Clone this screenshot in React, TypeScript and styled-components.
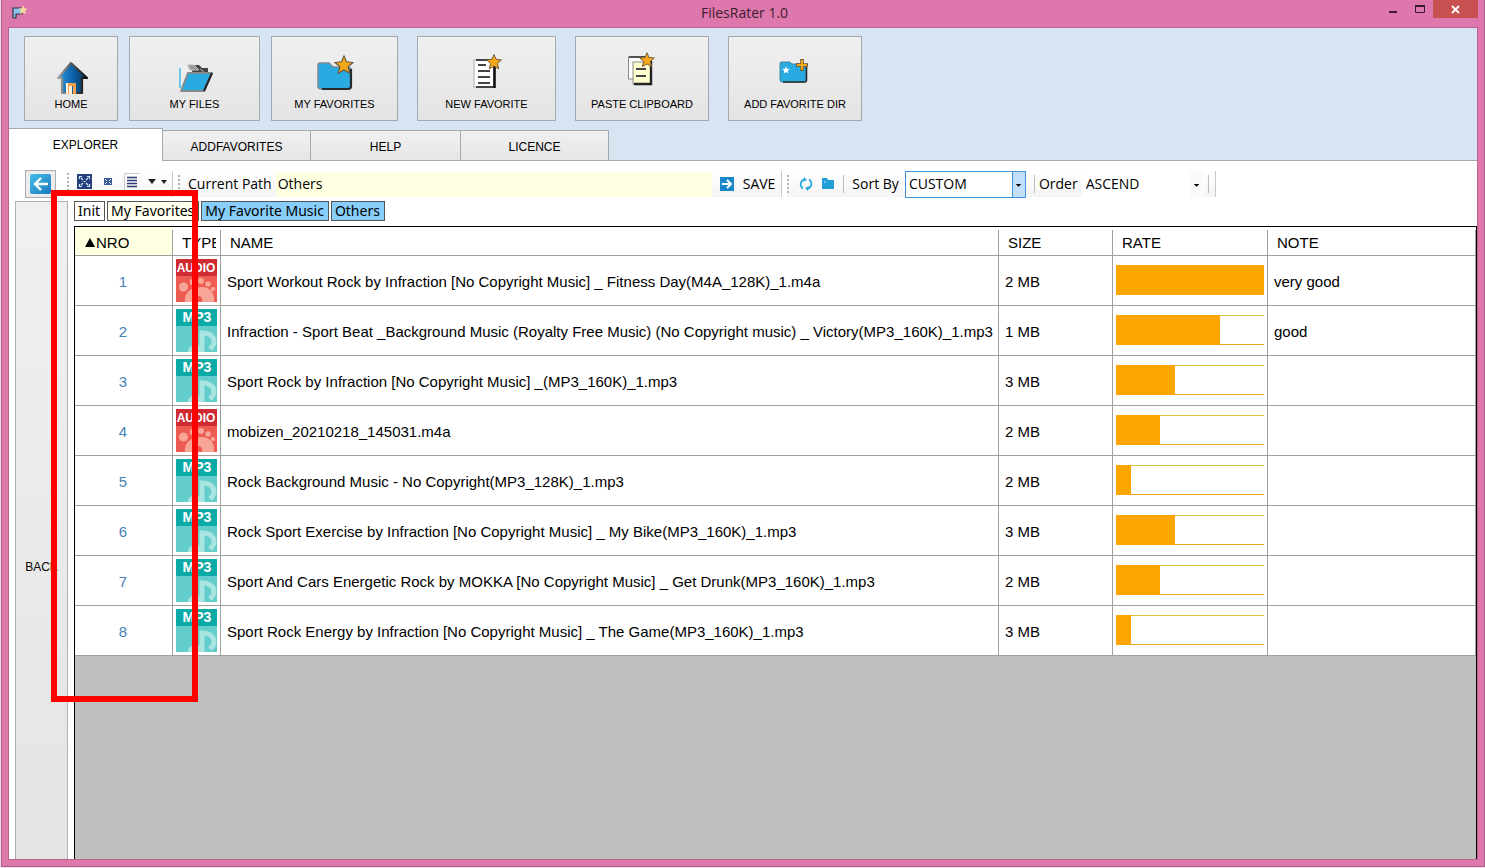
import React from "react";
import styled, { createGlobalStyle } from "styled-components";

const sans = '"Liberation Sans", Arial, sans-serif';
const ui = '"Open Sans", "Noto Sans", sans-serif';
const tahoma = '"Noto Sans", "Open Sans", sans-serif';

const GlobalStyle = createGlobalStyle`
  * { box-sizing: border-box; }
  body { margin: 0; background: #f6dcea; font-family: ${sans}; color: #000; }
  button, input, select { font: inherit; color: inherit; margin: 0; border-radius: 0; }
`;

const Window = styled.div`
  position: relative;
  display: flex;
  flex-direction: column;
  min-height: calc(100vh - 1px);
  margin-left: 1px;
  padding: 0 6px 6px;
  background: #de77ab;
  border: solid #a8608a;
  border-width: 0 1px 1px;
`;

const TitleBar = styled.header`
  display: grid;
  grid-template-columns: 1fr auto 1fr;
  height: 27px;
  padding-left: 3px;
`;

const AppIcon = styled.svg`
  display: block;
  margin-top: 5px;
`;

const Title = styled.h1`
  margin: 0;
  font: 400 14px/26px ${ui};
  color: #3d1c30;
`;

const WindowButtons = styled.div`
  display: flex;
  justify-content: flex-end;
  align-items: flex-start;
`;

const WindowButton = styled.button<{ $close?: boolean }>`
  width: ${(p) => (p.$close ? 45 : 27)}px;
  height: 18px;
  padding: 0;
  border: 0;
  background: ${(p) => (p.$close ? "#c75050" : "transparent")};
  svg { display: block; margin: 0 auto; }
`;

const Client = styled.main`
  flex: 1;
  display: flex;
  flex-direction: column;
  border: 1px solid #b9648f;
  background: #d7e4f2;
`;

const ActionBar = styled.nav`
  display: flex;
  align-items: flex-start;
  gap: 19px;
  padding: 8px 15px 7px;
`;

const ActionGroup = styled.div`
  display: flex;
  gap: 11px;
`;

const ActionButton = styled.button<{ $width: number }>`
  display: flex;
  flex-direction: column;
  align-items: center;
  justify-content: flex-end;
  width: ${(p) => p.$width}px;
  height: 85px;
  padding: 0 0 9px;
  border: 1px solid #a3a9ae;
  background: linear-gradient(#f0f0f0, #e4e4e4);
  font-size: 11px;
  line-height: 14px;
  white-space: nowrap;
`;

const Tabs = styled.div`
  display: flex;
  align-items: flex-end;
  height: 33px;
`;

const Tab = styled.button<{ $width: number; $active?: boolean }>`
  width: ${(p) => p.$width}px;
  height: ${(p) => (p.$active ? 33 : 31)}px;
  padding: ${(p) => (p.$active ? 0 : 2)}px 0 0;
  border: solid #a5a8ac;
  border-width: ${(p) => (p.$active ? "1px 1px 0 0" : "1px 1px 1px 0")};
  background: ${(p) => (p.$active ? "#fff" : "linear-gradient(#f0f0f0, #e6e6e6)")};
  font-size: 12px;
  line-height: 16px;
`;

const TabRule = styled.div`
  flex: 1;
  height: 1px;
  background: #a5a8ac;
`;

const Page = styled.section`
  flex: 1;
  display: flex;
  flex-direction: column;
  background: #fff;
`;

const ToolBar = styled.div`
  display: flex;
  align-items: center;
  height: 40px;
  padding: 6px 0 0 16px;
  font: 14px/20px ${ui};
`;

const BackButton = styled.button`
  width: 31px;
  height: 28px;
  margin-right: 11px;
  padding: 0;
  border: 1px solid #a9adb1;
  background: #ececec;
  svg { display: block; margin: 0 auto; }
`;

const Strip = styled.div<{ $views?: boolean }>`
  display: flex;
  align-items: center;
  gap: 8px;
  height: 26px;
  margin-right: 5px;
  padding: ${(p) => (p.$views ? "0 2px 5px 0" : "0 6px 0 0")};
  border-right: 1px solid #c8c8c8;
  background: linear-gradient(#fff, #f4f4f4);
  white-space: nowrap;
`;

const Grip = styled.span`
  width: 2px;
  height: 18px;
  background: repeating-linear-gradient(#b4b4b4 0 2px, transparent 2px 4px);
`;

const Separator = styled.span`
  width: 1px;
  height: 18px;
  background: #bdbdbd;
`;

const IconButton = styled.button`
  display: flex;
  align-items: center;
  gap: 9px;
  padding: 0;
  border: 0;
  background: transparent;
  svg { display: block; }
`;

const PathField = styled.input`
  width: 436px;
  height: 25px;
  padding: 0 2px 2px;
  border: 0;
  background: #ffffe1;
`;

const FieldGroup = styled.span<{ $tight?: boolean }>`
  display: flex;
  align-items: center;
  gap: ${(p) => (p.$tight ? 4 : 6)}px;
`;

const SelectBox = styled.span<{ $width: number; $active?: boolean }>`
  position: relative;
  display: flex;
  width: ${(p) => p.$width}px;
  height: 27px;
  border: 1px solid ${(p) => (p.$active ? "#3c93dc" : "transparent")};
  background: #fff;
  select {
    appearance: none;
    width: 100%;
    padding: 0 3px;
    border: 0;
    background: transparent;
  }
  svg {
    position: absolute;
    top: 0;
    right: 0;
    pointer-events: none;
    background: ${(p) => (p.$active ? "#c2e0fb" : "#fafafa")};
    border-left: 1px solid ${(p) => (p.$active ? "#3c93dc" : "transparent")};
  }
`;

const Workspace = styled.div`
  flex: 1;
  display: flex;
  gap: 6px;
  padding-left: 6px;
`;

const SideBack = styled.button`
  width: 53px;
  padding: 72px 0 0;
  border: 1px solid #adb2b5;
  border-bottom: 0;
  background: linear-gradient(#f0f0f0, #e4e4e4);
  font-size: 12px;
  line-height: 16px;
`;

const Browser = styled.div`
  flex: 1;
  display: flex;
  flex-direction: column;
  min-width: 0;
`;

const Crumbs = styled.nav`
  display: flex;
  gap: 2px;
  height: 25px;
`;

const Crumb = styled.a<{ $color: string }>`
  height: 20px;
  padding: 0 4px 0 3px;
  border: 1px solid #555;
  background: ${(p) => p.$color};
  color: #000;
  font: 14px/17px ${tahoma};
  text-decoration: none;
  white-space: nowrap;
`;

const GridArea = styled.div`
  flex: 1;
  border: solid #000;
  border-width: 1px 1px 0 1px;
  background: #bfbfbf;
`;

const Table = styled.table`
  width: 100%;
  table-layout: fixed;
  border-spacing: 0;
  background: #fff;
  font-size: 15px;
  line-height: 18px;
`;

const HeadCell = styled.th<{ $sorted?: boolean }>`
  height: 29px;
  padding: 4px 5px 0 9px;
  border-bottom: 1px solid #a0a0a0;
  background: linear-gradient(#a0a0a0, #a0a0a0) right 3px / 1px 25px no-repeat,
    ${(p) => (p.$sorted ? "#ffffe1" : "#fff")};
  font-weight: 400;
  text-align: left;
`;

const HeadLabel = styled.span`
  display: block;
  overflow: hidden;
  white-space: nowrap;
`;

const Cell = styled.td`
  height: 50px;
  padding: 2px 6px 0;
  border: solid #a0a0a0;
  border-width: 0 1px 1px 0;
  white-space: nowrap;
  overflow: hidden;
`;

const NumberCell = styled(Cell)`
  padding-right: 7px;
  color: #4682b4;
  text-align: center;
`;

const TypeCell = styled(Cell)`
  padding: 0 3px;
  svg { display: block; }
`;

const RateCell = styled(Cell)`
  padding: 0 3px 2px;
`;

const Meter = styled.div`
  height: 30px;
  border: solid #e8a420;
  border-width: 1px 0;
  border-top-color: #dcc040;
  background: #fff;
`;

const MeterFill = styled.div`
  height: 30px;
  margin-top: -1px;
  background: #ffa500;
`;

const Highlight = styled.div`
  position: absolute;
  left: 49px;
  top: 190px;
  width: 147px;
  height: 512px;
  border: 6px solid #f00;
  pointer-events: none;
`;

const starPoints = "0,-11 3,-4 11,-3 5,2 7,10 0,6 -7,10 -5,2 -11,-3 -3,-4";

const Star = ({ x, y, s = 1 }: { x: number; y: number; s?: number }) => (
  <polygon points={starPoints} transform={`translate(${x} ${y}) scale(${s})`} fill="#f5a81c" stroke="#6b5436" strokeWidth="1.4" />
);

const HomeIcon = () => (
  <svg width="48" height="48" viewBox="0 0 48 48" aria-hidden="true">
    <defs>
      <linearGradient id="house" x1="0" x2="1">
        <stop offset="0" stopColor="#2f9be0" />
        <stop offset="0.5" stopColor="#0c62ac" />
        <stop offset="1" stopColor="#0a3357" />
      </linearGradient>
      <linearGradient id="edge" x1="0" x2="1">
        <stop offset="0" stopColor="#a5a5a5" />
        <stop offset="0.6" stopColor="#444" />
        <stop offset="1" stopColor="#0c0c0c" />
      </linearGradient>
    </defs>
    <path d="M24 14 11 29h4v15h20V29h5Z" fill="url(#house)" stroke="url(#edge)" strokeWidth="2.2" strokeLinejoin="round" />
    <path d="M19 34h10v11h-3v-8h-4v8h-3z" fill="#f6a04b" />
    <path d="M19 34h2v11h-2zM22 37h3v8h-3z" fill="#fff0d8" />
  </svg>
);

const FilesIcon = () => (
  <svg width="48" height="48" viewBox="0 0 48 48" aria-hidden="true">
    <path d="M10 16h18l3 3h6v14H10Z" fill="#444" />
    <path d="M9 16h7l6 4-8 22h-4z" fill="#eee" />
    <path d="M17 16h6l5 5h-9zM29 20l5 4" fill="#999" stroke="#bbb" />
    <path d="M9 19v20" stroke="#28b4e4" strokeWidth="1.3" />
    <path d="M17 24h24l-8 18H10Z" fill="#29abe2" stroke="#858a8d" strokeWidth="2" strokeLinejoin="round" />
    <path d="m41 24-8 18" stroke="#222" strokeWidth="2" />
  </svg>
);

const FavoritesIcon = () => (
  <svg width="48" height="48" viewBox="0 0 48 48" aria-hidden="true">
    <path d="M9 14h9l4 4h15q3 0 3 3v16q0 3-3 3H10q-3 0-3-3V16q0-2 2-2Z" fill="#29abe2" stroke="#7b8d96" strokeWidth="1.6" />
    <path d="M40 20v17q0 3-3 3H11" fill="none" stroke="#252a2e" strokeWidth="2.2" />
    <Star x={33} y={16} s={0.82} />
  </svg>
);

const NewFavoriteIcon = () => (
  <svg width="48" height="48" viewBox="0 0 48 48" aria-hidden="true">
    <rect x="11" y="11" width="20" height="27" fill="#fff" stroke="#aaa" />
    <path d="M13 11h18M13 38h18" stroke="#444" strokeWidth="2.2" />
    <path d="M31.500 11v28" stroke="#111" strokeWidth="2.600" />
    <path d="M15 16h8M15 22h12M15 28h12M15 34h12" stroke="#444" strokeWidth="2" />
    <Star x={31} y={13} s={0.68} />
  </svg>
);

const PasteIcon = () => (
  <svg width="48" height="48" viewBox="0 0 48 48" aria-hidden="true">
    <rect x="10.500" y="8" width="18" height="22" fill="#fff" stroke="#888" />
    <path d="M11 8h17" stroke="#444" strokeWidth="1.8" />
    <rect x="15" y="13" width="18" height="22" fill="#ffffcf" stroke="#888" />
    <path d="M33 12v23H16" fill="none" stroke="#222" strokeWidth="2.4" />
    <path d="M18 20h10M18 27h10" stroke="#444" strokeWidth="2.2" />
    <Star x={29} y={11} s={0.66} />
  </svg>
);

const AddDirIcon = () => (
  <svg width="48" height="48" viewBox="0 0 48 48" aria-hidden="true">
    <path d="M10 13h9l2 2h12q2 0 2 2v14q0 2-2 2H11q-2 0-2-2V15q0-2 1-2Z" fill="#29abe2" stroke="#4387a5" />
    <path d="M35.500 18v13q0 2-2 2H12" fill="none" stroke="#252a2e" strokeWidth="1.6" />
    <polygon points={starPoints} transform="translate(15 21) scale(0.34)" fill="#fff" />
    <path d="M31 10v12M25 16h12" stroke="#6b5436" strokeWidth="3.6" />
    <path d="M31 11v10M26 16h10" stroke="#f5a81c" strokeWidth="2.2" />
  </svg>
);

const AudioIcon = () => (
  <svg width="41" height="43" viewBox="0 0 41 43" role="img" aria-label="Audio">
    <rect width="41" height="43" fill="#ee5b50" />
    <rect width="41" height="17" fill="#cf2b33" />
    <g fill="#f7a596">
      <circle cx="7.500" cy="28" r="4.500" />
      <circle cx="17" cy="23" r="3.200" />
      <circle cx="25" cy="22" r="3" />
      <circle cx="32" cy="25" r="2.800" />
      <circle cx="37" cy="30" r="2.200" />
      <path d="M9 43C8 32 17 28 26 28s13 7 12 15H26c2-8-9-8-7 0Z" />
    </g>
    <text x="20" y="13" textAnchor="middle" fontFamily={sans} fontWeight="700" fontSize="12" fill="#fff">AUDIO</text>
  </svg>
);

const Mp3Icon = () => (
  <svg width="41" height="43" viewBox="0 0 41 43" role="img" aria-label="MP3">
    <rect width="41" height="43" fill="#62cdca" />
    <rect width="41" height="17" fill="#0caaa6" />
    <path d="M26 43V24c7 0 12 3 12 9 0 3-2 5-4 7" fill="none" stroke="#a9e5e0" strokeWidth="5" />
    <ellipse cx="20" cy="42" rx="8" ry="6" fill="#a9e5e0" />
    <text x="21" y="13" textAnchor="middle" fontFamily={sans} fontWeight="700" fontSize="14" fill="#fff">MP3</text>
  </svg>
);

const Arrow = () => (
  <svg width="13" height="25" viewBox="0 0 13 25" aria-hidden="true">
    <path d="M3 12h6l-3 3z" fill="#000" />
  </svg>
);

const files = [
  { type: "audio", name: "Sport Workout Rock by Infraction [No Copyright Music] _ Fitness Day(M4A_128K)_1.m4a", size: "2 MB", rate: 100, note: "very good" },
  { type: "mp3", name: "Infraction - Sport Beat _Background Music (Royalty Free Music) (No Copyright music) _ Victory(MP3_160K)_1.mp3", size: "1 MB", rate: 70, note: "good" },
  { type: "mp3", name: "Sport Rock by Infraction [No Copyright Music] _(MP3_160K)_1.mp3", size: "3 MB", rate: 40, note: "" },
  { type: "audio", name: "mobizen_20210218_145031.m4a", size: "2 MB", rate: 30, note: "" },
  { type: "mp3", name: "Rock Background Music - No Copyright(MP3_128K)_1.mp3", size: "2 MB", rate: 10, note: "" },
  { type: "mp3", name: "Rock Sport Exercise by Infraction [No Copyright Music] _ My Bike(MP3_160K)_1.mp3", size: "3 MB", rate: 40, note: "" },
  { type: "mp3", name: "Sport And Cars Energetic Rock by MOKKA [No Copyright Music] _ Get Drunk(MP3_160K)_1.mp3", size: "2 MB", rate: 30, note: "" },
  { type: "mp3", name: "Sport Rock Energy by Infraction [No Copyright Music] _ The Game(MP3_160K)_1.mp3", size: "3 MB", rate: 10, note: "" },
];

const columns = ["NRO", "TYPE", "NAME", "SIZE", "RATE", "NOTE"];

const crumbs = [
  { label: "Init", color: "#fff" },
  { label: "My Favorites", color: "#fffff0" },
  { label: "My Favorite Music", color: "#87cefa" },
  { label: "Others", color: "#87cefa" },
];

export default function App() {
  return (
    <>
      <GlobalStyle />
      <Window>
        <TitleBar>
          <AppIcon width="17" height="14" viewBox="0 0 17 14" aria-hidden="true">
            <path d="M2 13V3h9v6H5v4z" fill="#8cc4ee" stroke="#334" strokeWidth="1.2" />
            <polygon points={starPoints} transform="translate(12 5) scale(0.42)" fill="#f9d9a0" />
          </AppIcon>
          <Title>FilesRater 1.0</Title>
          <WindowButtons>
            <WindowButton aria-label="Minimize">
              <svg width="10" height="16" viewBox="0 0 10 16"><path d="M1 11h8" stroke="#3a1830" strokeWidth="2" /></svg>
            </WindowButton>
            <WindowButton aria-label="Maximize">
              <svg width="12" height="16" viewBox="0 0 12 16"><path d="M1.500 4v7.500h9V4" fill="none" stroke="#3a1830" /><path d="M1 5h10" stroke="#3a1830" strokeWidth="2" /></svg>
            </WindowButton>
            <WindowButton $close aria-label="Close">
              <svg width="12" height="16" viewBox="0 0 12 16"><path d="m2 5 7 7M9 5l-7 7" stroke="#fff" strokeWidth="1.8" /></svg>
            </WindowButton>
          </WindowButtons>
        </TitleBar>
        <Client>
          <ActionBar>
            <ActionGroup>
              <ActionButton $width={94}><HomeIcon />HOME</ActionButton>
              <ActionButton $width={131}><FilesIcon />MY FILES</ActionButton>
              <ActionButton $width={127}><FavoritesIcon />MY FAVORITES</ActionButton>
            </ActionGroup>
            <ActionButton $width={139}><NewFavoriteIcon />NEW FAVORITE</ActionButton>
            <ActionButton $width={134}><PasteIcon />PASTE CLIPBOARD</ActionButton>
            <ActionButton $width={134}><AddDirIcon />ADD FAVORITE DIR</ActionButton>
          </ActionBar>
          <Tabs role="tablist">
            <Tab role="tab" aria-selected="true" $width={154} $active>EXPLORER</Tab>
            <Tab role="tab" aria-selected="false" $width={148}>ADDFAVORITES</Tab>
            <Tab role="tab" aria-selected="false" $width={150}>HELP</Tab>
            <Tab role="tab" aria-selected="false" $width={148}>LICENCE</Tab>
            <TabRule />
          </Tabs>
          <Page>
            <ToolBar>
              <BackButton aria-label="Go back">
                <svg width="21" height="20" viewBox="0 0 21 20">
                  <defs>
                    <linearGradient id="back" x1="0" x2="1" y2="1">
                      <stop offset="0" stopColor="#46bfe6" />
                      <stop offset="1" stopColor="#1a78c0" />
                    </linearGradient>
                  </defs>
                  <rect width="21" height="20" rx="2" fill="url(#back)" />
                  <path d="M11 4 5 10l6 6M5 10h13" fill="none" stroke="#fff" strokeWidth="2.4" />
                </svg>
              </BackButton>
              <Strip $views>
                <Grip />
                <IconButton aria-label="Large icons">
                  <svg width="15" height="15" viewBox="0 0 15 15">
                    <rect width="15" height="15" fill="#26407e" />
                    <path d="M2.500 5V2.500H5M10 2.500h2.500V5M12.500 10v2.500H10M5 12.500H2.500V10" fill="none" stroke="#d9e4ff" strokeWidth="1.2" />
                    <path d="m4 4 2 2M11 4 9 6M11 11 9 9M4 11l2-2M6.500 7.500h2" fill="none" stroke="#d9e4ff" strokeWidth="1.1" />
                  </svg>
                </IconButton>
                <IconButton aria-label="Small icons">
                  <svg width="16" height="15" viewBox="0 0 16 15">
                    <rect x="4" y="4" width="8" height="7" fill="#3b5a9a" />
                    <path d="m5 5 2 2M11 5 9 7M5 10l2-2M11 10 9 8" stroke="#dbe6ff" />
                  </svg>
                </IconButton>
                <IconButton aria-label="Details">
                  <svg width="16" height="17" viewBox="0 0 16 17">
                    <path d="M.5 17V.5H16" fill="none" stroke="#ccc" />
                    <path d="M3 4.500h10M3 7.500h10M3 10.500h10M3 13.500h10" stroke="#2f3d75" strokeWidth="1.300" />
                  </svg>
                </IconButton>
                <IconButton aria-label="More views">
                  <svg width="22" height="10" viewBox="0 0 22 10"><path d="M0 2h8L4 7zM13 3h6l-3 4z" fill="#222" /></svg>
                </IconButton>
              </Strip>
              <Strip>
                <Grip />
                <FieldGroup $tight>
                  <label htmlFor="path">Current Path</label>
                  <PathField id="path" defaultValue="Others" />
                </FieldGroup>
                <IconButton>
                  <svg width="14" height="14" viewBox="0 0 14 14">
                    <rect width="14" height="14" fill="#1787c6" />
                    <path d="M2 7h9M7 3l4 4-4 4" fill="none" stroke="#fff" strokeWidth="2" />
                  </svg>
                  SAVE
                </IconButton>
              </Strip>
              <Strip>
                <Grip />
                <IconButton aria-label="Refresh">
                  <svg width="16" height="14" viewBox="0 0 16 14">
                    <path d="M7 2.500a5 5 0 0 0-1 9M11 11.500a5 5 0 0 0 1-9" fill="none" stroke="#29a9e0" strokeWidth="1.700" />
                    <path d="m7 0 3 3-4 2zM11 14l-3-3 4-2z" fill="#29a9e0" />
                  </svg>
                </IconButton>
                <IconButton aria-label="Open folder">
                  <svg width="14" height="12" viewBox="0 0 14 12"><path d="M1 0h5l1 2h6v9H1z" fill="#209fd8" /><path d="M3 4h2" stroke="#bfe8fa" /></svg>
                </IconButton>
                <Separator />
                <FieldGroup>
                  <label htmlFor="sort">Sort By</label>
                  <SelectBox $width={121} $active>
                    <select id="sort" defaultValue="CUSTOM"><option>CUSTOM</option></select>
                    <Arrow />
                  </SelectBox>
                </FieldGroup>
                <FieldGroup $tight>
                  <Separator />
                  <label htmlFor="order">Order</label>
                  <SelectBox $width={122}>
                    <select id="order" defaultValue="ASCEND"><option>ASCEND</option></select>
                    <Arrow />
                  </SelectBox>
                  <Separator />
                </FieldGroup>
              </Strip>
            </ToolBar>
            <Workspace>
              <SideBack>BACK</SideBack>
              <Browser>
                <Crumbs aria-label="Path">
                  {crumbs.map((c) => (
                    <Crumb key={c.label} href="#" $color={c.color}>{c.label}</Crumb>
                  ))}
                </Crumbs>
                <GridArea>
                  <Table>
                    <colgroup>
                      <col width="98" />
                      <col width="48" />
                      <col width="778" />
                      <col width="114" />
                      <col width="155" />
                      <col />
                    </colgroup>
                    <thead>
                      <tr>
                        {columns.map((label, i) => (
                          <HeadCell key={label} $sorted={i === 0}>
                            <HeadLabel>
                              {i === 0 && (
                                <svg width="12" height="10" viewBox="0 0 12 10" aria-hidden="true"><path d="M6 0 11 9H1z" fill="#000" /></svg>
                              )}
                              {label}
                            </HeadLabel>
                          </HeadCell>
                        ))}
                      </tr>
                    </thead>
                    <tbody>
                      {files.map((f, i) => (
                        <tr key={f.name}>
                          <NumberCell>{i + 1}</NumberCell>
                          <TypeCell>{f.type === "audio" ? <AudioIcon /> : <Mp3Icon />}</TypeCell>
                          <Cell>{f.name}</Cell>
                          <Cell>{f.size}</Cell>
                          <RateCell>
                            <Meter><MeterFill style={{ width: `${f.rate}%` }} /></Meter>
                          </RateCell>
                          <Cell>{f.note}</Cell>
                        </tr>
                      ))}
                    </tbody>
                  </Table>
                </GridArea>
              </Browser>
            </Workspace>
          </Page>
        </Client>
        <Highlight />
      </Window>
    </>
  );
}
